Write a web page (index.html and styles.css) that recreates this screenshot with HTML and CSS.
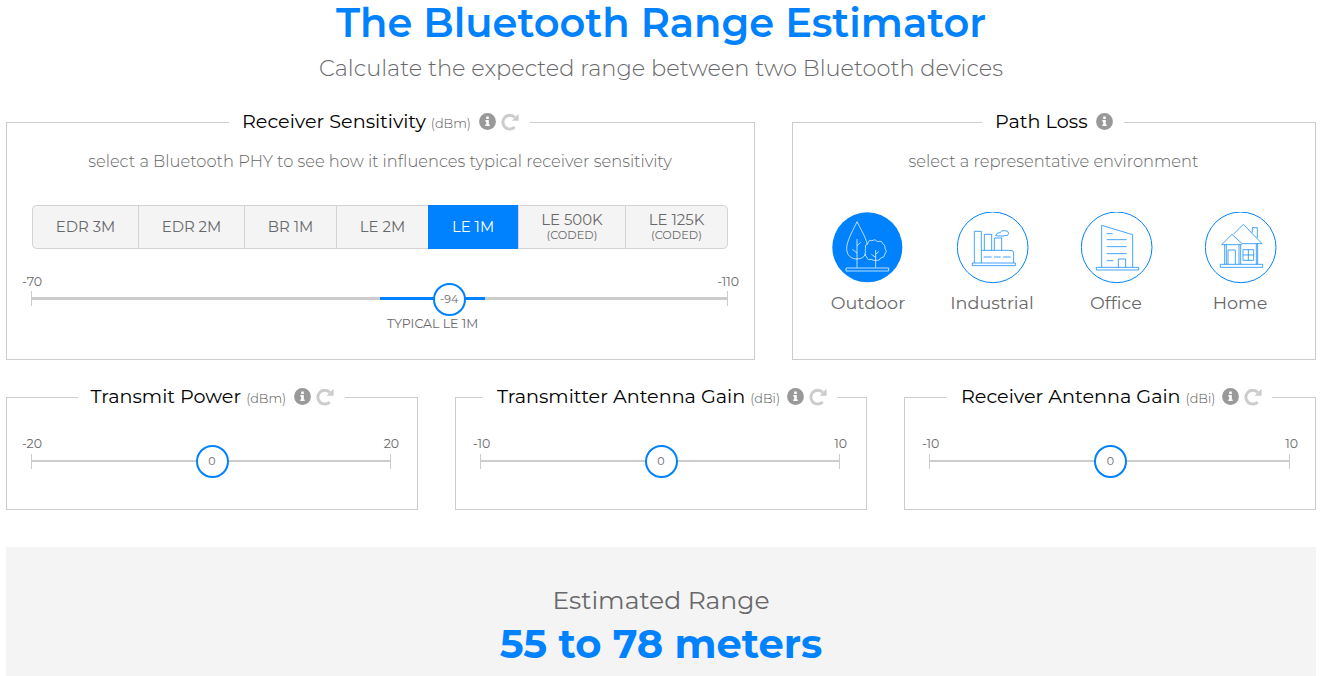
FILE: index.html
```html
<!DOCTYPE html>
<html lang="en">
<head>
<meta charset="utf-8">
<title>The Bluetooth Range Estimator</title>
<link rel="stylesheet" href="styles.css">
</head>
<body>
<svg class="defs" width="0" height="0">
  <symbol id="info" viewBox="0 0 17 17"><circle cx="8.5" cy="8.5" r="8.4" fill="#999"/><path d="M7.2 3.6h2.6v2.3H7.2zM6.4 7h3.4v4.4h.9v1.7H6.3v-1.7h.9V8.700h-.8z" fill="#fff"/></symbol>
  <symbol id="reset" viewBox="0 0 18 18"><path d="M13.700 14A6.900 6.900 0 1 1 13.800 4.500" fill="none" stroke="#ccc" stroke-width="3"/><path d="M17.600 .8v7h-7z" fill="#ccc"/></symbol>
</svg>
<main class="page">
  <h1 class="title">The Bluetooth Range Estimator</h1>
  <p class="subtitle">Calculate the expected range between two Bluetooth devices</p>

  <div class="row row-top">
    <fieldset class="panel">
      <legend class="legend w-rs"><span>Receiver Sensitivity</span><small>(dBm)</small><svg class="info"><use href="#info"/></svg><svg class="reset"><use href="#reset"/></svg></legend>
      <p class="desc">select a Bluetooth PHY to see how it influences typical receiver sensitivity</p>
      <div class="phys">
        <button>EDR 3M</button><button>EDR 2M</button><button>BR 1M</button><button>LE 2M</button><button class="active">LE 1M</button><button><span>LE 500K</span><small>(CODED)</small></button><button><span>LE 125K</span><small>(CODED)</small></button>
      </div>
      <div class="ends"><span>-70</span><span>-110</span></div>
      <div class="slider thick"><i class="typical"></i><b class="knob">-94</b></div>
      <p class="caption">TYPICAL LE 1M</p>
    </fieldset>

    <fieldset class="panel">
      <legend class="legend w-pl"><span>Path Loss</span><svg class="info"><use href="#info"/></svg></legend>
      <p class="desc">select a representative environment</p>
      <div class="envs">
        <div class="env active">
          <svg viewBox="33 36 216 216"><circle class="disc" cx="142" cy="142" r="105"/><path d="M111 65C104 82 80 121 80 145C80 166 93 177 111 177C124 177 132 171 138 162M111 65C119 82 138 112 142 134M111 203V117M111 137l11-10M111 159l-14-11M137 146q-5-11 7-16q1-11 11-8q11-7 18 3q13-4 15 6q10 5 7 14q8 9 0 17q-2 12-13 12q-3 9-12 7q-9 2-16-3q-11 4-14-7q-10-6-3-16q-4-4 0-9M167 203V150M167 163l10-9M167 172l-13-9M78 204h128v9H78z"/></svg>
          <span>Outdoor</span>
        </div>
        <div class="env">
          <svg viewBox="411 36 216 216"><circle class="disc" cx="518" cy="142" r="106"/><path d="M463 189V94h21v95M493 151v-48h22v48M523 151v-37h22v37M484 151h89q8 0 8 8v30M457 189h129v8H457zM491 171h24M522 171h20M549 171h23M527 107q2-10 13-9q5-8 14-6q11-1 12 8q-1 9-11 7q-9 2-18 1z"/></svg>
          <span>Industrial</span>
        </div>
        <div class="env">
          <svg viewBox="63 36 216 216"><circle class="disc" cx="170" cy="142" r="106"/><path d="M125 202V76l93 28v98M140 101h18M140 119h60M140 140h60M140 161h60M140 182h20M175 202v-25h22v25M109 202h127v8H109z"/></svg>
          <span>Office</span>
        </div>
        <div class="env">
          <svg viewBox="435 36 216 216"><circle class="disc" cx="542" cy="142" r="106"/><path d="M520 103l30-30l56 58h-60l-30-28l-31 31h60M577 98V83h15v31M494 134v59M499 134v59M537 134v59M542 134v59M589 131v62M593 131v62M504 193v-43h22v43M549 149h32v32h-32zM565 149v32M549 165h32M481 193h127v9H481z"/></svg>
          <span>Home</span>
        </div>
      </div>
    </fieldset>
  </div>

  <div class="row row-bottom">
    <fieldset class="panel">
      <legend class="legend w-tp"><span>Transmit Power</span><small>(dBm)</small><svg class="info"><use href="#info"/></svg><svg class="reset"><use href="#reset"/></svg></legend>
      <div class="ends"><span>-20</span><span>20</span></div>
      <div class="slider"><b class="knob">0</b></div>
    </fieldset>
    <fieldset class="panel">
      <legend class="legend w-tg"><span>Transmitter Antenna Gain</span><small>(dBi)</small><svg class="info"><use href="#info"/></svg><svg class="reset"><use href="#reset"/></svg></legend>
      <div class="ends"><span>-10</span><span>10</span></div>
      <div class="slider"><b class="knob">0</b></div>
    </fieldset>
    <fieldset class="panel">
      <legend class="legend w-rg"><span>Receiver Antenna Gain</span><small>(dBi)</small><svg class="info"><use href="#info"/></svg><svg class="reset"><use href="#reset"/></svg></legend>
      <div class="ends"><span>-10</span><span>10</span></div>
      <div class="slider"><b class="knob">0</b></div>
    </fieldset>
  </div>

  <section class="result">
    <p class="result-label">Estimated Range</p>
    <p class="result-value">55 to 78 meters</p>
  </section>
</main>
</body>
</html>
```
FILE: styles.css
```css
* { box-sizing: border-box; }
body { margin: 0; height: 676px; overflow: hidden; background: #fff; color: #68686b; font-family: Montserrat, Inter, "Open Sans", sans-serif; }
h1, p { margin: 0; font-weight: 400; }
.defs { position: absolute; }
.page { width: 1310px; margin-left: 6px; text-align: center; white-space: nowrap; }
.title { font-size: 40px; line-height: 45px; font-weight: 600; color: #0082ff; }
.subtitle { padding-top: 2px; font-size: 22.5px; line-height: 42px; font-weight: 300; }

.row { display: flex; justify-content: space-between; }
.row-top { display: grid; grid-template-columns: 749px 524px; height: 249px; margin-top: 22px; }
.row-bottom { display: grid; grid-template-columns: repeat(3, 412px); height: 124px; margin-top: 26px; }
.panel { margin: 0; min-width: 0; border: 1px solid #ccc; padding: 0 26px 0 24px; }
.legend { display: flex; align-items: center; height: 23px; margin: 0 auto; padding: 0 0 0 12px; position: relative; left: 1px; color: #000; font-size: 19.2px; line-height: 23px; }
.legend span { padding-bottom: 2px; }
.legend small { margin-left: 5px; padding-top: 2px; font-size: 12.8px; font-weight: 300; color: #555; }
.w-rs { width: 301px; }
.w-pl { width: 142px; }
.w-tp { width: 267px; padding-left: 13px; left: 0; }
.w-tg { width: 354px; padding-left: 13px; }
.w-rg { width: 325px; padding-left: 13px; }
.info { width: 17px; height: 17px; margin: -2px 0 0 8px; }
.reset { width: 18px; height: 18px; margin: -2px 0 0 5px; }
.w-tg .info, .w-rg .info { margin-left: 7px; }

.desc { padding: 16px 0 0 1px; font-size: 16.3px; line-height: 22px; font-weight: 300; color: #666; }
.phys { display: grid; grid-template-columns: 106px 106px 92px 92px 90px 107px 103px; height: 44px; margin: 33px 0 0 1px; }
.phys button { display: flex; flex-direction: column; align-items: center; justify-content: center; margin: 0; padding: 0; border: solid #d3d3d3; border-width: 1px 0 1px 1px; background: #f4f4f4; color: #68686b; font-family: inherit; font-size: 14.9px; line-height: 16px; }
.phys button:first-child { border-radius: 5px 0 0 5px; }
.phys button:last-child { border-right-width: 1px; border-radius: 0 5px 5px 0; }
.phys button.active { padding-right: 1px; border-color: #0082ff; background: #0082ff; color: #fff; }
.phys small { font-size: 11.3px; line-height: 15px; }

.ends { display: flex; justify-content: space-between; margin: 25px -11px 1px -9px; font-size: 12.5px; line-height: 16px; }
.slider { position: relative; height: 15px; border: solid #ccc; border-width: 0 1px; background: linear-gradient(#ccc, #ccc) 0 6px / 100% 2px no-repeat; }
.slider.thick { background-size: 100% 3px; }
.typical { position: absolute; left: 348px; top: 6px; width: 105px; height: 3px; background: #0082ff; }
.knob { position: absolute; left: 50%; top: -9px; width: 33px; height: 33px; margin-left: -15.500px; border: 2px solid #0082ff; border-radius: 50%; background: #fff; font-size: 11px; line-height: 29px; font-weight: 400; }
.thick .knob { left: 60%; top: -8px; margin-left: -16.300px; }
.caption { width: 804px; margin: 9px 0 0 -1px; padding-left: 1px; font-size: 12.5px; line-height: 17px; }
.row-bottom .ends { margin: 27px -8px 2px -9px; }
.row-bottom .panel:nth-child(n+2) .ends { margin-left: -7px; margin-right: -7px; }
.row-bottom .panel:last-child { padding-right: 25px; }
.row-bottom .panel:last-child .ends { margin-right: -8px; }

.envs { display: flex; margin: 40px -26px 0 -13px; }
.env { flex: none; width: 124px; font-size: 17.6px; line-height: 22px; }
.env:first-child { width: 126px; margin-right: 1px; }
.env span { position: relative; left: -1px; }
.env.active span { left: 1px; }
.env svg { display: block; width: 72px; height: 72px; margin: 0 auto 8px; fill: none; stroke: #0082ff; stroke-width: 2.2; }
.env .disc { stroke-width: 3; }
.env.active .disc { fill: #0082ff; stroke: none; }
.env.active svg { stroke: #fff; }

.result { height: 129px; margin-top: 37px; padding-top: 36px; background: #f4f4f4; }
.result-label { font-size: 25px; line-height: 34px; }
.result-value { font-size: 40px; line-height: 54px; font-weight: 700; color: #0082ff; }
```
